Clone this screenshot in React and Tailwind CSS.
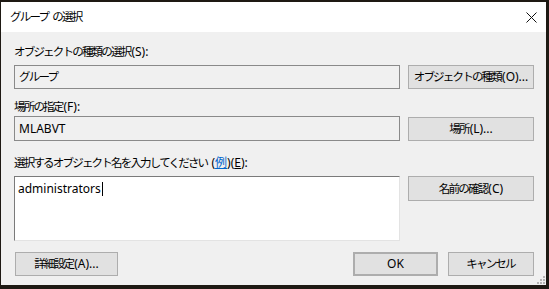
import React from "react";

const font = { fontFamily: '"Noto Sans", "Noto Sans CJK JP", sans-serif' };

// CJK runs get a slightly smaller, tighter setting, latin keeps normal spacing
function J({ children }) {
  const parts = String(children).split(/([\u3000-\u9fff\uff00-\uffef]+)/);
  return parts.map((p, i) =>
    /[\u3000-\u9fff\uff00-\uffef]/.test(p) ? (
      <span key={i} className="text-[11.5px] tracking-[-1.8px] mr-[1px]">{p}</span>
    ) : (
      <span key={i}>{p}</span>
    )
  );
}

function Btn({ children, className = "" }) {
  return (
    <div
      className={`flex items-center justify-center whitespace-nowrap bg-[#e1e1e1] border border-[#adadad] text-[12px] text-black ${className}`}
    >
      {children}
    </div>
  );
}

export default function App() {
  return (
    <div
      className="w-[549px] h-[289px] bg-[#1e1913] pt-[2px] pl-[1px] overflow-hidden"
      style={font}
    >
      <div className="relative w-[545px] h-[283px] bg-[#f0f0f0] flex flex-col">
        {/* title bar */}
        <div className="h-[30px] bg-white flex items-center justify-between pl-[9px] pr-[9px]">
          <span className="text-[12px] text-black leading-none whitespace-pre">
            <J>グループ</J> <J>の選択</J>
          </span>
          <svg width="11" height="11" viewBox="0 0 11 11">
            <path d="M0.5 0.5 L10.5 10.5 M10.5 0.5 L0.5 10.5" stroke="#111" strokeWidth="1" />
          </svg>
        </div>

        {/* body */}
        <div className="pl-[13px] pr-[12px] pt-[12px] text-[12px] text-black">
          <div className="h-[16px] leading-[16px]"><J>オブジェクトの種類の選択(S):</J></div>
          <div className="mt-[5px] flex gap-[8px]">
            <div className="w-[386px] h-[24px] border border-[#8a8a8a] flex items-center pl-[4px]">
              <J>グループ</J>
            </div>
            <Btn className="w-[126px] h-[24px]"><J>オブジェクトの種類(O)...</J></Btn>
          </div>

          <div className="mt-[10px] h-[16px] leading-[16px]"><J>場所の指定(F):</J></div>
          <div className="mt-[1px] flex gap-[8px] items-center">
            <div className="w-[386px] h-[25px] border border-[#8a8a8a] flex items-center pl-[4px]">
              MLABVT
            </div>
            <Btn className="w-[126px] h-[24px]"><J>場所(L)...</J></Btn>
          </div>

          <div className="mt-[14px] h-[16px] leading-[16px] whitespace-pre">
            <J>選択するオブジェクト名を入力してください</J> (
            <span className="text-[#0066cc] underline">例</span>)(<span className="underline">E</span>):
          </div>
          <div className="mt-[5px] flex gap-[8px] items-start">
            <div className="w-[386px] h-[65px] bg-white border-t border-l border-[#7a7a7a] border-r-[#e3e3e3] border-b-[#e3e3e3] border-r border-b pl-[3px] pt-[3px]">
              <span className="inline-flex items-center h-[16px]">
                administrators
                <span className="inline-block w-[1px] h-[14px] bg-black ml-[1px]" />
              </span>
            </div>
            <Btn className="w-[126px] h-[25px]"><J>名前の確認(C)</J></Btn>
          </div>

          <div className="mt-[11px] flex items-center">
            <Btn className="ml-[1px] w-[103px] h-[24px]"><J>詳細設定(A)...</J></Btn>
            <div className="flex-1" />
            <Btn className="w-[85px] h-[24px] border-2 border-[#0078d7]">OK</Btn>
            <Btn className="ml-[10px] w-[86px] h-[24px]"><J>キャンセル</J></Btn>
          </div>
        </div>

        {/* resize grip */}
        <div className="absolute right-[1px] bottom-[1px] grid grid-cols-3 gap-[1px]">
          <span className="w-[2px] h-[2px]" />
          <span className="w-[2px] h-[2px]" />
          <span className="w-[2px] h-[2px] bg-[#b4b4b4]" />
          <span className="w-[2px] h-[2px]" />
          <span className="w-[2px] h-[2px] bg-[#b4b4b4]" />
          <span className="w-[2px] h-[2px] bg-[#b4b4b4]" />
          <span className="w-[2px] h-[2px] bg-[#b4b4b4]" />
          <span className="w-[2px] h-[2px] bg-[#b4b4b4]" />
          <span className="w-[2px] h-[2px] bg-[#b4b4b4]" />
        </div>
      </div>
    </div>
  );
}
